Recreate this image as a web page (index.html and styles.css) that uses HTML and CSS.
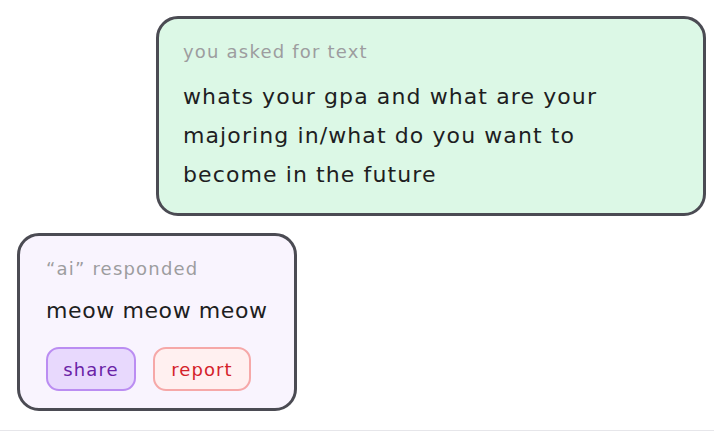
FILE: index.html
```html
<!DOCTYPE html>
<html lang="en">
<head>
<meta charset="utf-8">
<title>chat</title>
<link rel="stylesheet" href="styles.css">
</head>
<body>
<main class="thread">
  <div class="row row-user">
    <section class="bubble bubble-user">
      <div class="label">you asked for text</div>
      <p class="message">whats your gpa and what are your majoring in/what do you want to become in the future</p>
    </section>
  </div>
  <div class="row row-ai">
    <section class="bubble bubble-ai">
      <div class="label">“ai” responded</div>
      <p class="message">meow meow meow</p>
      <div class="actions">
        <button class="btn btn-share">share</button>
        <button class="btn btn-report">report</button>
      </div>
    </section>
  </div>
</main>
</body>
</html>
```
FILE: styles.css
```css
* { box-sizing: border-box; }
html, body { margin: 0; padding: 0; background: #ffffff; }
body {
  font-family: "DejaVu Sans", "Noto Sans", sans-serif;
  color: #1e1e22;
  height: 431px;
  overflow: hidden;
}
.thread {
  height: 431px;
  padding: 16px 8px 0 17px;
  display: flex;
  flex-direction: column;
  gap: 17px;
  border-bottom: 1px solid #e6e6ea;
}
.row { display: flex; }
.row-user { justify-content: flex-end; }
.row-ai { justify-content: flex-start; }
.bubble {
  border: 3px solid #4b4b53;
  border-radius: 22px;
}
.bubble-user {
  width: 550px;
  background: #dcf8e6;
  padding: 20px 60px 19px 24px;
}
.bubble-ai {
  width: 280px;
  background: #f9f4fe;
  padding: 20px 4px 17px 26px;
}
.label {
  font-size: 18px;
  line-height: 25px;
  letter-spacing: 1.2px;
  color: #9d9d9f;
}
.message {
  margin: 13px 0 0 0;
  font-size: 22px;
  line-height: 39px;
  letter-spacing: 1.1px;
  color: #1e1e22;
}
.bubble-ai .message {
  margin-top: 10px;
  letter-spacing: 0.6px;
  white-space: nowrap;
}
.actions {
  display: flex;
  gap: 17px;
  margin-top: 17px;
}
.btn {
  font-family: inherit;
  font-size: 18px;
  letter-spacing: 1.1px;
  height: 44px;
  padding: 0;
  border-radius: 13px;
  border: 2px solid;
  background: none;
}
.btn-share {
  background: #e8d9fd;
  border-color: #bb8df2;
  color: #6a23a6;
  width: 90px;
}
.btn-report {
  background: #fff0f0;
  border-color: #f6a8a8;
  color: #d4222a;
  width: 98px;
}
```
